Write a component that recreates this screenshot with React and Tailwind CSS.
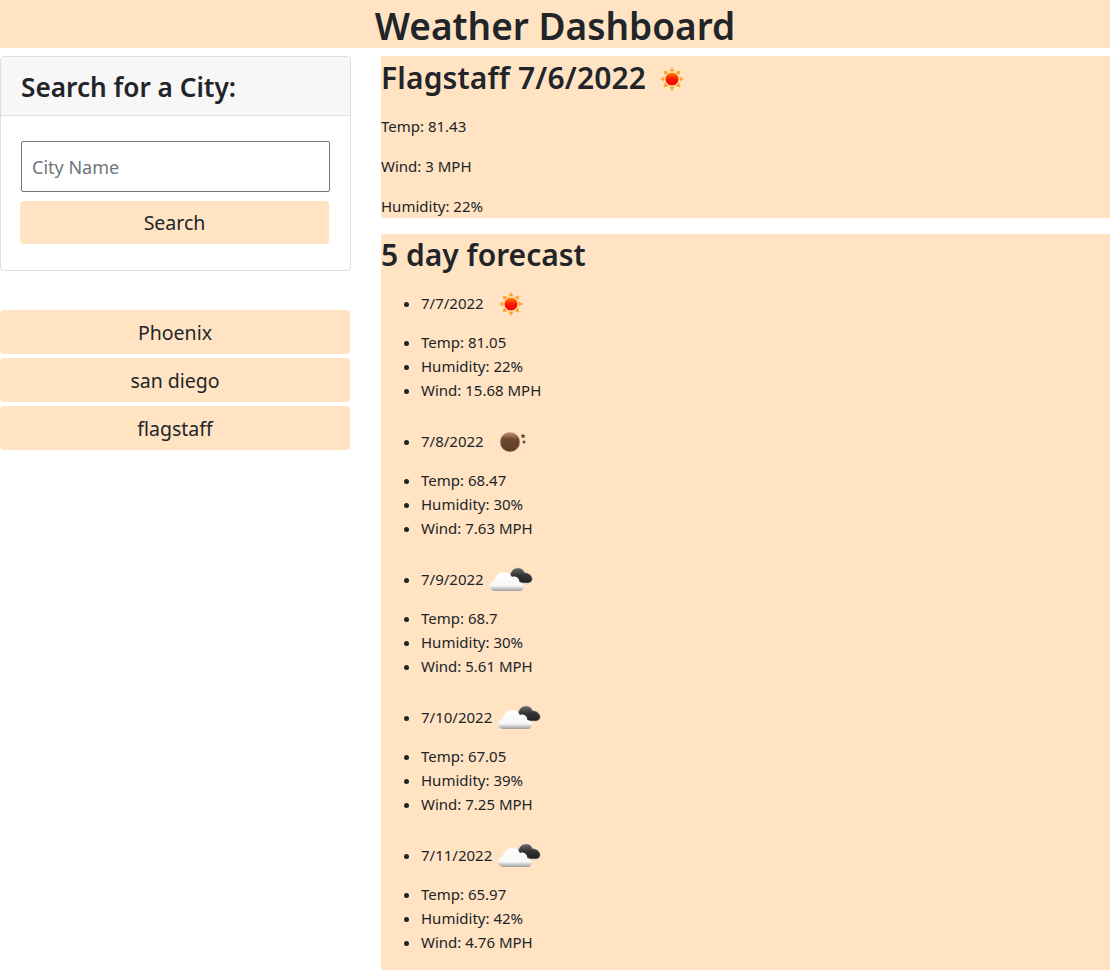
import React from "react";

const days = [
  { date: "7/7/2022", icon: "sun", temp: "81.05", humidity: "22%", wind: "15.68 MPH" },
  { date: "7/8/2022", icon: "moon", temp: "68.47", humidity: "30%", wind: "7.63 MPH" },
  { date: "7/9/2022", icon: "cloud", temp: "68.7", humidity: "30%", wind: "5.61 MPH" },
  { date: "7/10/2022", icon: "cloud", temp: "67.05", humidity: "39%", wind: "7.25 MPH" },
  { date: "7/11/2022", icon: "cloud", temp: "65.97", humidity: "42%", wind: "4.76 MPH" },
];

const cities = ["Phoenix", "san diego", "flagstaff"];

function WeatherIcon({ kind, className }) {
  return (
    <svg viewBox="0 0 50 34" className={className}>
      <defs>
        <linearGradient id="sunFill" x1="0" y1="0" x2="0" y2="1">
          <stop offset="0" stopColor="#ff9a00" />
          <stop offset="0.5" stopColor="#ff1500" />
          <stop offset="1" stopColor="#f00000" />
        </linearGradient>
        <linearGradient id="moonFill" x1="0" y1="0" x2="0" y2="1">
          <stop offset="0" stopColor="#c39a7e" />
          <stop offset="0.35" stopColor="#70482f" />
          <stop offset="1" stopColor="#5e3d28" />
        </linearGradient>
        <linearGradient id="whiteCloud" x1="0" y1="0" x2="0" y2="1">
          <stop offset="0" stopColor="#ffffff" />
          <stop offset="0.72" stopColor="#f8f8f8" />
          <stop offset="1" stopColor="#9d9d9d" />
        </linearGradient>
        <linearGradient id="darkCloud" x1="0" y1="0" x2="0" y2="1">
          <stop offset="0" stopColor="#6a6a6a" />
          <stop offset="0.5" stopColor="#333333" />
          <stop offset="1" stopColor="#222222" />
        </linearGradient>
      </defs>
      {kind === "sun" && (
        <g>
          <g fill="#ffa424">
            <path d="M25 5l2.500 4.500h-5z" />
            <path d="M25 29l2.500-4.500h-5z" />
            <path d="M13 17l4.500-2.500v5z" />
            <path d="M37 17l-4.500-2.500v5z" />
            <path d="M16.500 8.500l5 1.400-3.600 3.600z" />
            <path d="M33.500 8.500l-5 1.400 3.600 3.600z" />
            <path d="M16.500 25.500l5-1.400-3.600-3.600z" />
            <path d="M33.500 25.500l-5-1.400 3.600-3.600z" />
          </g>
          <circle cx="25" cy="17" r="7" fill="url(#sunFill)" stroke="#ffe9c9" strokeWidth="1" />
        </g>
      )}
      {kind === "moon" && (
        <g>
          <circle cx="24" cy="17" r="10" fill="url(#moonFill)" stroke="#e8c8ad" strokeWidth="0.6" />
          <path d="M37 8.500l.9 1.500 1.600.4-1.100 1.200.2 1.600-1.600-.7-1.500.7.200-1.600-1.100-1.200 1.600-.4z" fill="#6d4a35" />
          <circle cx="38" cy="17" r="1.500" fill="#6d4a35" />
        </g>
      )}
      {kind === "cloud" && (
        <g>
          <path d="M24 13c.6-4.500 3.800-8 8-8 3.200 0 5.500 1.700 6.500 4.500 3.500.1 6.500 2 7.500 5 .8 3-1 5.500-4.500 5.500H30z" fill="url(#darkCloud)" stroke="#b5b5b5" strokeWidth="0.6" />
          <path d="M10 28c-3.500 0-6-2.200-6-5.300 0-2.700 2-4.700 4.700-5.200 1-4.500 4.300-8.500 9.300-8.500 3.800 0 6.500 2 8 5 1.800-.8 3.700-.6 5.200.5 1.500 1.100 2.200 2.800 2.200 4.500 2.600.3 4.600 1.800 4.600 4 0 2.900-2 5-4.500 5z" fill="url(#whiteCloud)" />
        </g>
      )}
    </svg>
  );
}

function App() {
  return (
    <div className="min-h-[970px] bg-white text-[#212529] font-['Noto_Sans',sans-serif] text-[15px] overflow-hidden">
      <h1 className="h-12 pt-1 bg-[#ffe3c3] text-center text-[37px] font-semibold leading-[44px]">Weather Dashboard</h1>

      <div className="mt-2 flex gap-[30px]">
        <div className="w-[351px] shrink-0">
          <div className="border border-[#dfdfdf] rounded-[4px] overflow-hidden">
            <div className="h-[59px] bg-[#f7f7f7] border-b border-[#dfdfdf] px-5 text-[26.2px] font-semibold leading-[60px]">Search for a City:</div>
            <div className="h-[154px] px-5 pt-[25px]">
              <input
                placeholder="City Name"
                className="block w-[309px] h-[51px] border border-[#767676] rounded-[2px] px-[10px] text-lg placeholder:text-[#6c757d]"
              />
              <button className="block -ml-px mt-[9px] w-[309px] h-[43px] pt-px bg-[#ffe3c3] rounded-[4px] text-[19.5px]">Search</button>
            </div>
          </div>

          <div className="mt-[39px] flex flex-col gap-[4.5px]">
            {cities.map((city) => (
              <button key={city} className="w-[350px] h-[43.5px] pt-px bg-[#ffe3c3] rounded-[4px] text-[19.5px]">{city}</button>
            ))}
          </div>
        </div>

        <div className="flex-1 min-w-0">
          <div className="bg-[#ffe3c3] h-[162px]">
            <h2 className="h-[50px] mb-2 text-[30px] font-semibold leading-[44px] tracking-[0.15px]">
              Flagstaff 7/6/2022
              <WeatherIcon kind="sun" className="inline-block align-top w-[50px] h-[34px] mt-[6px] ml-[1px]" />
            </h2>
            <p className="mb-4 leading-6">Temp: 81.43</p>
            <p className="mb-4 leading-6">Wind: 3 MPH</p>
            <p className="leading-6">Humidity: 22%</p>
          </div>

          <div className="mt-4 bg-[#ffe3c3] h-[740px]">
            <h2 className="h-[38px] mb-2 text-[30px] font-semibold leading-[42px]">5 day forecast</h2>
            {days.map((day) => (
              <div key={day.date}>
                <ul className="list-disc pl-10 mb-4">
                  <li className="h-[34px] pt-[11px] leading-6">
                    {day.date}
                    <WeatherIcon kind={day.icon} className="inline-block align-middle w-[50px] h-[34px] -my-4 ml-[2px] -translate-y-px" />
                  </li>
                </ul>
                <ul className="list-disc pl-10 mb-4">
                  <li className="leading-6">Temp: {day.temp}</li>
                  <li className="leading-6">Humidity: {day.humidity}</li>
                  <li className="leading-6">Wind: {day.wind}</li>
                </ul>
              </div>
            ))}
          </div>
        </div>
      </div>
    </div>
  );
}

export default App;
